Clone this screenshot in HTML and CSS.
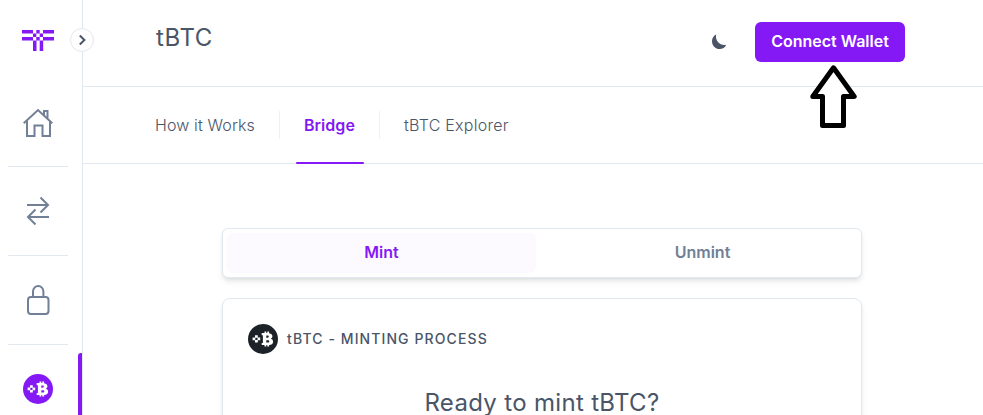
FILE: index.html
```html
<!DOCTYPE html>
<html lang="en">
<head>
    <meta charset="UTF-8">
    <meta name="viewport" content="width=device-width, initial-scale=1.0">
    <title>tBTC Bridge</title>
    <link rel="stylesheet" href="styles.css">
</head>
<body>

<!-- shared coin artwork, coloured by the parent -->
<svg class="sprite" width="0" height="0">
    <symbol id="coin" viewBox="0 0 30 30">
        <circle cx="15" cy="15" r="15" fill="currentColor"/>
        <path fill="#fff" d="M7 11.200h2.800v2.600H7zM4.600 13.500h2.700v2.700H4.600zM9.500 13.500h2.700v2.700H9.500zM7 15.900h2.800v2.600H7z"/>
        <path fill="#fff" fill-rule="evenodd" d="M13.700 9h2.800V7.400h1.800V9h1V7.400h1.800V9.200c2.200.4 3.300 1.500 3.300 3.100 0 1.200-.6 2.100-1.600 2.500 1.600.4 2.300 1.500 2.300 3 0 1.900-1.200 3.100-4 3.300v1.500h-1.800V21.100H18.300v1.500H16.500V21.100h-2.800v-2.200h1.200v-7.700H13.700zM18.300 11.500v2.200h1.300c.8 0 1.200-.4 1.200-1.100s-.4-1.100-1.200-1.100zM18.300 16.200v2.400h1.500c1 0 1.500-.5 1.500-1.200s-.5-1.200-1.500-1.200z"/>
    </symbol>
</svg>

<div class="app">
    <aside class="sidebar">
        <div class="logo">
            <svg width="32" height="21" viewBox="0 0 32 21" fill="currentColor">
                <path d="M0 0h11v3.500H0zM14.300 0h3.400v3.500h-3.400zM21 0h11v3.500H21zM11 3.500h3.300v3.500H11zM17.700 3.500H21v3.500h-3.300zM0 7h11v3.500H0zM14.300 7h3.400v3.500h-3.400zM21 7h11v3.500H21zM11 10.500h3.500V21H11zM17.700 10.500h3.500V21h-3.500z"/>
            </svg>
        </div>
        <button class="toggle" aria-label="Expand">
            <svg width="24" height="24" viewBox="0 0 24 24" fill="none" stroke="currentColor" stroke-width="2">
                <path d="M9.800 7.500l4.600 4.500-4.600 4.500"/>
            </svg>
        </button>
        <nav class="side-nav">
            <a class="side-item home">
                <svg width="30" height="30" viewBox="0 0 30 30" fill="none" stroke="currentColor" stroke-width="2">
                    <path d="M.700 15.300L15 2l14.300 13.300M4 13v15h7.500V17.500h8V28H27V13M21 7V3h3.500v7.500"/>
                </svg>
            </a>
            <a class="side-item swap">
                <svg width="30" height="30" viewBox="0 0 30 30" fill="none" stroke="currentColor" stroke-width="2">
                    <path d="M4 10h21.500M17.500 2.500L25 10l-7.500 7.500M26 22H4.500M12.500 14.500L5 22l7.500 7.500"/>
                </svg>
            </a>
            <a class="side-item">
                <svg width="30" height="30" viewBox="0 0 30 30" fill="none" stroke="currentColor" stroke-width="2">
                    <rect x="5" y="12" width="20.500" height="17" rx="3"/>
                    <path d="M10 12V6.500a5.200 5.500 0 0 1 10.400 0V12"/>
                </svg>
            </a>
            <a class="side-item active">
                <svg width="30" height="30"><use href="#coin"/></svg>
            </a>
        </nav>
    </aside>

    <main class="main">
        <header class="header">
            <h1>tBTC</h1>
            <div class="actions">
                <svg class="moon" width="16" height="16" viewBox="0 0 16 16">
                    <path fill="currentColor" d="M5.200.5C2.600 1.600 1 4.200 1 7.200 1 11.600 4.400 15 8.600 15c3 0 5.600-1.600 6.700-4.300-5 1.600-11.700-3-10.100-10.200z"/>
                </svg>
                <button class="connect">Connect Wallet</button>
            </div>
            <svg class="pointer" width="49" height="65" viewBox="0 0 49 65">
                <path d="M24.500 3.800L45.200 32.500H34.500V61.500H13.500V32.500H3.800z" fill="#fff" stroke="#000" stroke-width="5" stroke-linejoin="round"/>
            </svg>
        </header>

        <nav class="tabs">
            <a class="tab">How it Works</a>
            <a class="tab current">Bridge</a>
            <a class="tab explorer">tBTC Explorer</a>
        </nav>

        <section class="content">
            <div class="card switch">
                <button class="option selected">Mint</button>
                <button class="option">Unmint</button>
            </div>
            <div class="card mint">
                <div class="label">
                    <svg width="30" height="30"><use href="#coin"/></svg>
                    <span>tBTC - MINTING PROCESS</span>
                </div>
                <h2>Ready to mint tBTC?</h2>
            </div>
        </section>
    </main>
</div>

</body>
</html>
```
FILE: styles.css
```css
* {
    box-sizing: border-box;
}

body {
    margin: 0;
    height: 415px;
    overflow: hidden;
    font-family: Inter, "Liberation Sans", sans-serif;
    font-size: 16px;
    line-height: 24px;
    color: #4a5568;
    background: #fff;
}

button {
    font: inherit;
    border: none;
    padding: 0 0 2px;
    background: none;
}

.sprite {
    position: absolute;
}

.app {
    display: flex;
    height: 415px;
    overflow: hidden;
}

/* Sidebar */
.sidebar {
    position: relative;
    flex: none;
    width: 83px;
    border-right: 1px solid #e2e8f0;
    color: #718096;
}

.logo {
    height: 78px;
    padding: 30px 0 0 22px;
    color: #8419f5;
}

.logo svg,
.side-item svg,
.toggle svg {
    display: block;
}

/* sits over the sidebar border */
.toggle {
    position: absolute;
    top: 28px;
    right: -12px;
    width: 24px;
    height: 24px;
    padding: 0;
    border: 1px solid #e2e8f0;
    border-radius: 50%;
    background: #fff;
    color: #4a5568;
    display: flex;
    align-items: center;
    justify-content: center;
}

.toggle svg {
    flex: none;
}

.side-item {
    display: flex;
    align-items: center;
    justify-content: center;
    width: 60px;
    height: 89px;
    margin-left: 8px;
    border-bottom: 1px solid #e2e8f0;
}

.side-item.home {
    padding-top: 2px;
}

.side-item.swap {
    padding-bottom: 2px;
}

.side-item.active {
    justify-content: flex-start;
    width: 74px;
    height: 72px;
    margin-top: 8px;
    padding-left: 15px;
    border-bottom: none;
    color: #8419f5;
}

.side-item.active::after {
    content: "";
    width: 4px;
    height: 72px;
    margin-left: auto;
    border-radius: 3px 0 0 0;
    background: #8419f5;
}

/* Header */
.main {
    flex: 1;
    min-width: 0;
}

.header {
    position: relative;
    display: flex;
    justify-content: space-between;
    height: 87px;
    padding: 22px 78px 0 73px;
    border-bottom: 1px solid #e2e8f0;
}

h1 {
    margin: 0;
    font-size: 24px;
    line-height: 32px;
    font-weight: 400;
    letter-spacing: 0.6px;
}

.actions {
    display: flex;
    align-items: center;
    gap: 28px;
    height: 40px;
}

.connect {
    width: 150px;
    height: 40px;
    border-radius: 6px;
    background: #8419f5;
    color: #fff;
    font-weight: 600;
}

/* arrow over the header border, pointing at the button */
.pointer {
    position: absolute;
    left: 726px;
    top: 64px;
}

/* Tabs */
.tabs {
    display: flex;
    height: 77px;
    padding-left: 72px;
    border-bottom: 1px solid #e2e8f0;
}

.tab {
    display: flex;
    align-items: center;
    height: 28px;
    margin-top: 24px;
    padding-right: 24px;
    font-weight: 300;
    letter-spacing: 0.13px;
}

.tab + .tab {
    padding-left: 24px;
    border-left: 1px solid #edf2f7;
}

.tab.explorer {
    letter-spacing: 0.26px;
}

.tab.current {
    position: relative;
    color: #8419f5;
    font-weight: 600;
    letter-spacing: 0.05px;
}

/* underline covers the bottom border */
.tab.current::after {
    content: "";
    position: absolute;
    left: 16px;
    right: 15px;
    top: 51px;
    height: 2px;
    border-radius: 1px;
    background: #8419f5;
}

/* Content */
.content {
    width: 640px;
    margin: 64px 0 0 139px;
}

.card {
    border: 1px solid #e2e8f0;
    border-radius: 6px;
    background: #fff;
    box-shadow: 0 4px 6px -1px rgba(0, 0, 0, 0.1), 0 2px 4px -1px rgba(0, 0, 0, 0.06);
}

.switch {
    display: flex;
    gap: 12px;
    height: 50px;
    padding: 4px;
}

.option {
    flex: 1;
    border-radius: 6px;
    font-weight: 600;
    color: #718096;
}

.option.selected {
    background: #fcfaff;
    color: #8419f5;
}

.mint {
    height: 300px;
    margin-top: 20px;
    padding: 25px;
    border-radius: 8px;
}

.label {
    display: flex;
    align-items: center;
    gap: 9px;
    height: 30px;
    font-size: 14px;
    font-weight: 500;
    letter-spacing: 1.1px;
}

.label svg {
    color: #1d2229;
}

h2 {
    margin: 33px 0 0;
    text-align: center;
    font-size: 24px;
    line-height: 32px;
    font-weight: 400;
    letter-spacing: 0.32px;
}
```
